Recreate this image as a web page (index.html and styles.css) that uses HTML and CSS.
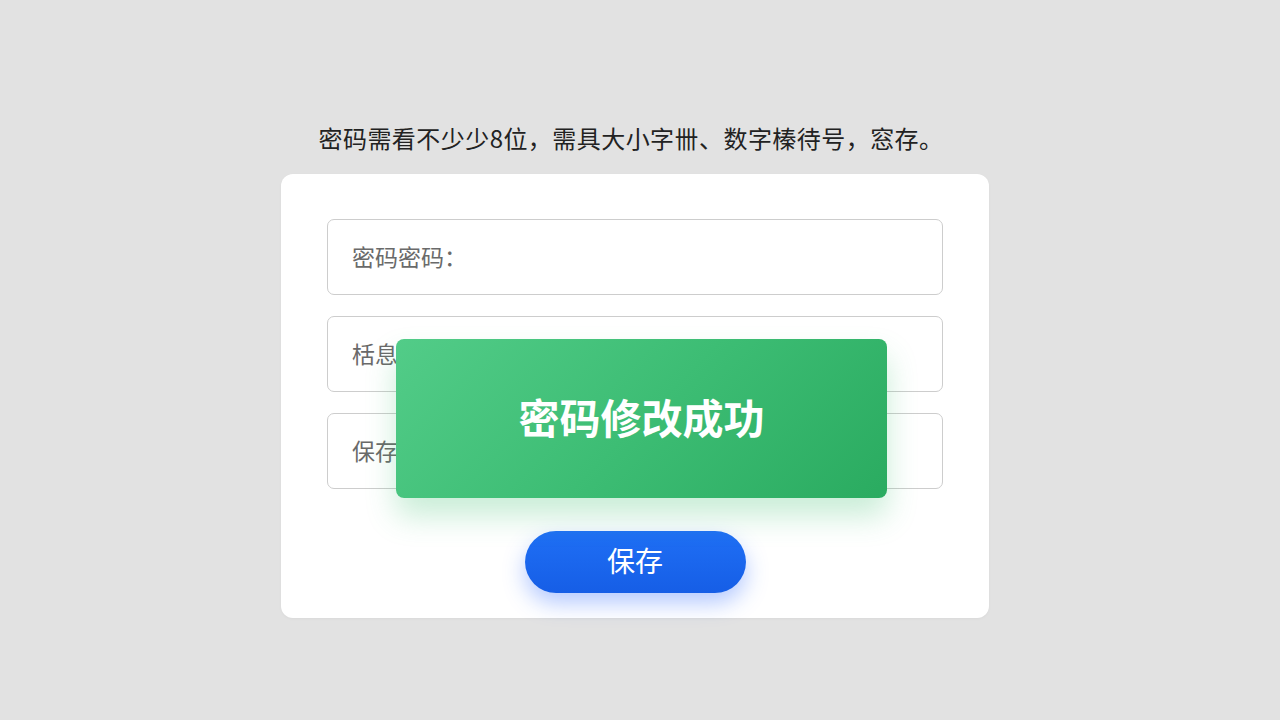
FILE: index.html
```html
<!DOCTYPE html>
<html lang="zh-CN">
<head>
<meta charset="utf-8">
<title>修改密码</title>
<link rel="stylesheet" href="styles.css">
</head>
<body>
<main class="page">
  <p class="hint">密码需看不少少8位，需具大小字卌、数字榛待号，窓存。</p>
  <section class="card">
    <div class="field"><span class="ph">密码密码：</span></div>
    <div class="field"><span class="ph">栝息密码：</span></div>
    <div class="field"><span class="ph">保存密码：</span></div>
    <div class="actions"><button class="save">保存</button></div>
    <div class="toast">密码修改成功</div>
  </section>
</main>
</body>
</html>
```

FILE: styles.css
```css
html, body {
  margin: 0;
  padding: 0;
  height: 100%;
}
body {
  background: #e2e2e2;
  font-family: "Noto Sans CJK SC", "Noto Sans", sans-serif;
  overflow: hidden;
}
.page {
  display: flex;
  flex-direction: column;
  align-items: center;
  padding-top: 122px;
}
.hint {
  margin: 0 18px 20px 0;
  font-size: 24px;
  line-height: 32px;
  letter-spacing: 0.45px;
  color: #222;
}
.card {
  position: relative;
  box-sizing: border-box;
  width: 708px;
  height: 444px;
  margin-right: 10px;
  background: #fff;
  border-radius: 12px;
  padding: 45px 46px 0 46px;
  display: flex;
  flex-direction: column;
  gap: 21px;
  box-shadow: 0 1px 3px rgba(0,0,0,0.04);
}
.field {
  box-sizing: border-box;
  height: 76px;
  border: 1.5px solid #cdcdcd;
  border-radius: 7px;
  display: flex;
  align-items: center;
  padding: 0 0 3px 24px;
}
.ph {
  font-size: 23px;
  color: #6a6a6a;
}
.actions {
  display: flex;
  justify-content: center;
  margin-top: 21px;
}
.save {
  width: 221px;
  height: 62px;
  border: none;
  border-radius: 31px;
  background: linear-gradient(180deg, #1f6ff5 0%, #165ee6 100%);
  color: #fff;
  font-family: "Noto Sans CJK SC", sans-serif;
  font-size: 28px;
  padding: 0 0 4px 0;
  box-shadow: 0 10px 22px rgba(40, 100, 255, 0.35);
}
.toast {
  position: absolute;
  left: 115px;
  top: 165px;
  width: 491px;
  height: 159px;
  box-sizing: border-box;
  padding-bottom: 6px;
  border-radius: 8px;
  background: linear-gradient(135deg, #52cc88 0%, #3dbd74 50%, #2aab60 100%);
  color: #fff;
  font-size: 41px;
  font-weight: 700;
  display: flex;
  align-items: center;
  justify-content: center;
  box-shadow: 0 18px 30px rgba(60, 190, 110, 0.28);
}
```
